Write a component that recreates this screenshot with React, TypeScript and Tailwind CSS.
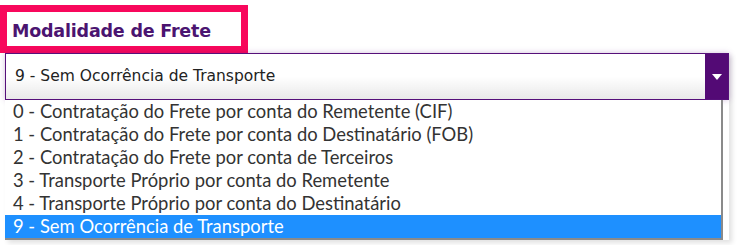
import React from "react";

const OPTIONS = [
  "0 - Contratação do Frete por conta do Remetente (CIF)",
  "1 - Contratação do Frete por conta do Destinatário (FOB)",
  "2 - Contratação do Frete por conta de Terceiros",
  "3 - Transporte Próprio por conta do Remetente",
  "4 - Transporte Próprio por conta do Destinatário",
  "9 - Sem Ocorrência de Transporte",
];

export default function App(): JSX.Element {
  return (
    <div className="w-[738px] h-[245px] bg-white pt-[5px] overflow-hidden">
      {/* Label with highlight */}
      <div className="w-[248px] h-[48px] border-[7px] border-[#f8085c] flex items-center pl-[5px] pt-[4px]">
        <span className="font-['DejaVu_Sans',sans-serif] font-bold text-[17.5px] text-[#4b1470] tracking-[-0.2px]">
          Modalidade de Frete
        </span>
      </div>

      {/* Select */}
      <div className="ml-[5px] w-[724px] flex flex-col shadow-[3px_3px_5px_rgba(0,0,0,0.12)]">
        <div className="h-[47px] flex border border-[#56107a] shadow-[0_0_6px_rgba(90,20,130,0.25)]">
          <div className="flex-1 flex items-center pl-[9px] bg-gradient-to-b from-white via-white to-[#e9e9e9] font-['DejaVu_Sans',sans-serif] text-[15.5px] text-[#222]">
            9 - Sem Ocorrência de Transporte
          </div>
          <div className="w-[23px] bg-[#530a75] flex items-center justify-center">
            <svg width="10" height="6" viewBox="0 0 10 6">
              <path d="M0 0 H10 L5 6 Z" fill="#fff" />
            </svg>
          </div>
        </div>

        <div className="w-[718px] border-r-[2px] border-b-[2px] border-[#8a8a8a] bg-white font-['Lato',sans-serif] text-[18.4px] text-[#333] leading-[23px]">
          {OPTIONS.map((option, i) => (
            <div
              key={option}
              className={
                i === OPTIONS.length - 1
                  ? "pl-[8px] bg-[#1e90ff] text-white"
                  : "pl-[8px]"
              }
            >
              {option}
            </div>
          ))}
        </div>
      </div>
    </div>
  );
}
